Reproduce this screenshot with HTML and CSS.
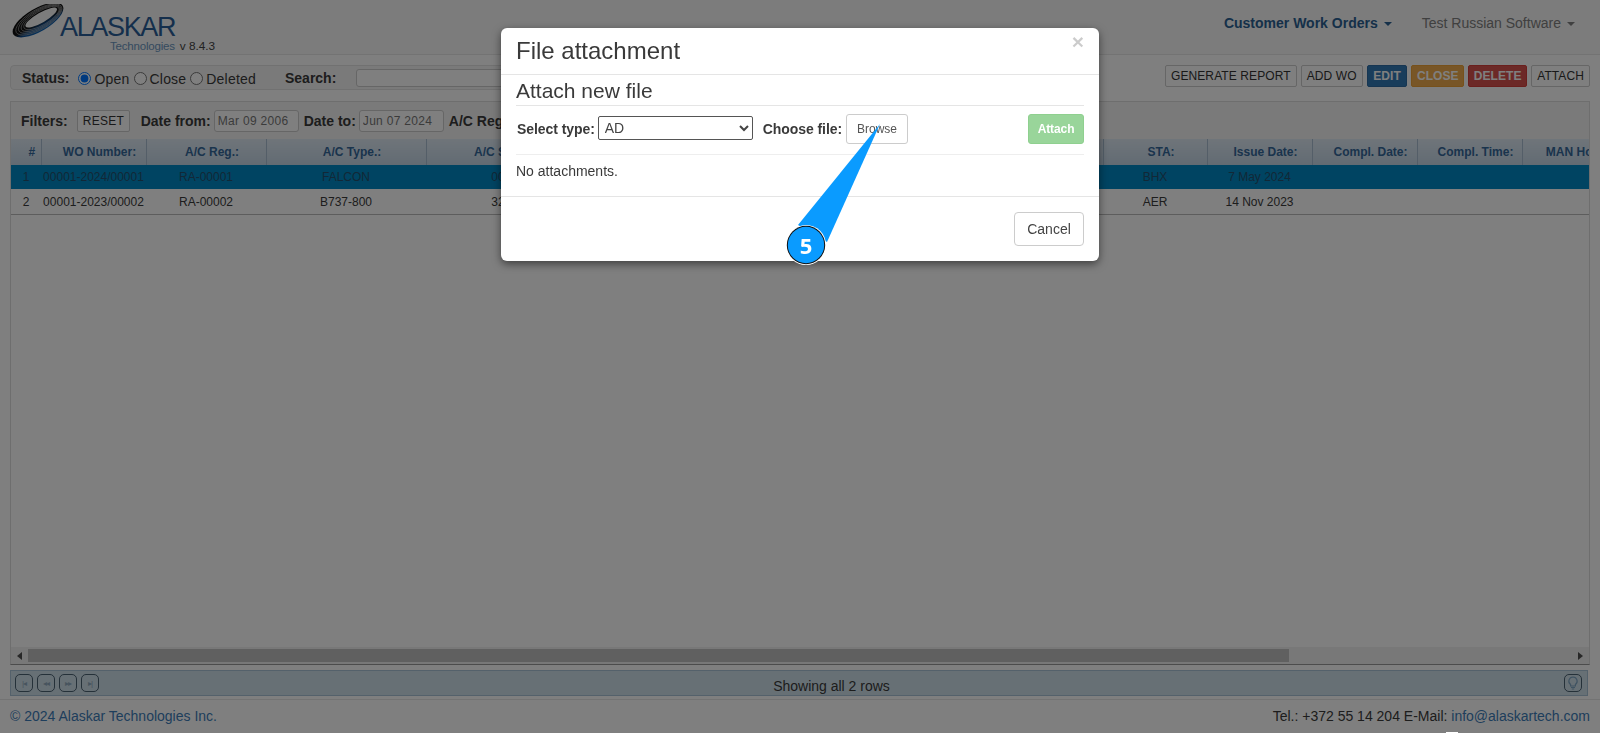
FILE: index.html
```html
<!DOCTYPE html>
<html>
<head>
  <meta charset="utf-8">
  <title>Customer Work Orders</title>
  <link rel="stylesheet" href="styles.css">
</head>
<body>
  <div class="page">
    <header class="navbar">
      <div class="brand">
        <svg class="brand-mark" width="58" height="34" viewBox="0 0 58 34">
          <defs>
            <linearGradient id="ring" x1="0" y1="0" x2="0" y2="1">
              <stop offset="0" stop-color="#080808"/>
              <stop offset="0.6" stop-color="#161616"/>
              <stop offset="0.8" stop-color="#0d4f96"/>
              <stop offset="1" stop-color="#0f66b8"/>
            </linearGradient>
          </defs>
          <g transform="rotate(-30 28 16)">
            <ellipse cx="28" cy="16" rx="28.5" ry="11.5" fill="url(#ring)"/>
            <g fill="none" stroke="#a8a8a8" stroke-width="0.6">
              <ellipse cx="29" cy="16" rx="26" ry="10"/>
              <ellipse cx="30" cy="16" rx="24" ry="9"/>
              <ellipse cx="31" cy="16" rx="22" ry="8"/>
              <ellipse cx="32" cy="16" rx="20" ry="7"/>
            </g>
            <ellipse cx="32" cy="15.5" rx="18" ry="5" fill="#f8f8f8"/>
          </g>
        </svg>
        <div class="brand-text">
          <div class="brand-name">ALASKAR</div>
          <div class="brand-sub"><span class="brand-tech">Technologies</span><span class="brand-ver">v 8.4.3</span></div>
        </div>
      </div>
      <nav class="nav-links">
        <a class="nav-link nav-active">Customer Work Orders<span class="caret"></span></a>
        <a class="nav-link">Test Russian Software<span class="caret"></span></a>
      </nav>
    </header>

    <div class="toolbar">
      <div class="status-well">
        <b class="status-label">Status:</b>
        <label class="radio"><input type="radio" name="st" checked>Open</label>
        <label class="radio"><input type="radio" name="st">Close</label>
        <label class="radio"><input type="radio" name="st">Deleted</label>
        <b class="search-label">Search:</b>
        <input class="search-input" type="text">
      </div>
      <div class="actions">
        <button class="btn">GENERATE REPORT</button>
        <button class="btn">ADD WO</button>
        <button class="btn btn-blue">EDIT</button>
        <button class="btn btn-orange">CLOSE</button>
        <button class="btn btn-red">DELETE</button>
        <button class="btn">ATTACH</button>
      </div>
    </div>

    <section class="grid-panel">
      <div class="filters">
        <b class="filters-label">Filters:</b>
        <button class="btn btn-reset">RESET</button>
        <b class="date-label">Date from:</b>
        <input class="date-input" type="text" value="Mar 09 2006">
        <b class="date-label">Date to:</b>
        <input class="date-input" type="text" value="Jun 07 2024">
        <b class="date-label">A/C Reg.:</b>
      </div>
      <div class="grid-scroll">
        <table class="grid">
          <colgroup>
            <col class="c-num"><col class="c-wo"><col class="c-reg"><col class="c-type"><col class="c-sn"><col class="c-hidden">
            <col class="c-sta"><col class="c-date"><col class="c-date"><col class="c-date"><col class="c-date">
          </colgroup>
          <thead>
            <tr>
              <th>#</th><th>WO Number:</th><th>A/C Reg.:</th><th>A/C Type.:</th><th>A/C Serial No:</th><th></th>
              <th>STA:</th><th>Issue Date:</th><th>Compl. Date:</th><th>Compl. Time:</th><th>MAN Hours:</th>
            </tr>
          </thead>
          <tbody>
            <tr class="selected">
              <td>1</td><td>00001-2024/00001</td><td>RA-00001</td><td>FALCON</td><td>00001</td><td></td>
              <td>BHX</td><td>7 May 2024</td><td></td><td></td><td></td>
            </tr>
            <tr>
              <td>2</td><td>00001-2023/00002</td><td>RA-00002</td><td>B737-800</td><td>32001</td><td></td>
              <td>AER</td><td>14 Nov 2023</td><td></td><td></td><td></td>
            </tr>
          </tbody>
        </table>
      </div>
      <div class="hscroll">
        <span class="arrow arrow-left"></span>
        <div class="hscroll-track"><div class="hscroll-thumb"></div></div>
        <span class="arrow arrow-right"></span>
      </div>
    </section>

    <div class="pager">
      <div class="pager-btns">
        <span class="pager-btn">|◂</span><span class="pager-btn">◂◂</span><span class="pager-btn">▸▸</span><span class="pager-btn">▸|</span>
      </div>
      <div class="pager-info">Showing all 2 rows</div>
      <span class="pager-btn pager-bulb">
        <svg width="12" height="14" viewBox="0 0 12 14">
          <path d="M6 1a4.2 4.2 0 0 0-2.4 7.6V10h4.8V8.6A4.2 4.2 0 0 0 6 1z" fill="none" stroke="#7fa6c4" stroke-width="1.2"/>
          <path d="M4 11.5h4M4.8 13h2.4" stroke="#7fa6c4" stroke-width="1.1"/>
        </svg>
      </span>
    </div>

    <footer class="footer">
      <a class="link">© 2024 Alaskar Technologies Inc.</a>
      <span>Tel.: +372 55 14 204 E-Mail: <a class="link">info@alaskartech.com</a></span>
    </footer>
  </div>

  <div class="backdrop"></div>

  <div class="modal">
    <div class="modal-head">
      <h4 class="modal-title">File attachment</h4>
      <span class="modal-close">×</span>
    </div>
    <div class="modal-body">
      <h5 class="attach-title">Attach new file</h5>
      <div class="attach-row">
        <b class="attach-label">Select type:</b>
        <select class="attach-select"><option>AD</option></select>
        <b class="attach-label attach-choose">Choose file:</b>
        <button class="btn-browse">Browse</button>
        <button class="btn-attach">Attach</button>
      </div>
      <div class="attach-empty">No attachments.</div>
    </div>
    <div class="modal-foot">
      <button class="btn-cancel">Cancel</button>
    </div>
  </div>

  <svg class="callout" width="100" height="150" viewBox="780 120 100 150">
    <polygon points="880,124 798,225 827,242" fill="#0a9bff"/>
    <circle cx="806" cy="245" r="20" fill="#fff"/>
    <circle cx="806" cy="245" r="19.2" fill="#111"/>
    <circle cx="806" cy="245" r="18.2" fill="#0a9bff"/>
    <text class="callout-num" x="806" y="254" text-anchor="middle">5</text>
  </svg>
  <div class="callout-edge"></div>
</body>
</html>
```

FILE: styles.css
```css
html, body {
  margin: 0;
  height: 733px;
  overflow: hidden;
  background: #fff;
}
body {
  font: 14px "Liberation Sans", Arial, sans-serif;
  color: #3a3a3a;
}
.page {
  height: 733px;
  display: flex;
  flex-direction: column;
}

/* top bar */
.navbar {
  flex: none;
  height: 54px;
  display: flex;
  justify-content: space-between;
  background: #f8f8f8;
  border-bottom: 1px solid #e7e7e7;
}
.brand {
  display: flex;
  padding: 4px 0 0 10px;
}
.brand-text {
  margin-left: -8px;
  padding-top: 11px;
}
.brand-name {
  font-size: 27px;
  line-height: 24px;
  letter-spacing: -1.35px;
  color: #2a5f98;
}
.brand-sub {
  display: flex;
  align-items: baseline;
  margin: 0 0 0 50px;
  white-space: nowrap;
}
.brand-tech {
  font-size: 11.5px;
  letter-spacing: -0.2px;
  color: #6b96bf;
}
.brand-ver {
  margin-left: 5px;
  font-size: 11.8px;
  color: #444;
}
.nav-links {
  display: flex;
  gap: 30px;
  padding: 15px 25px 0 0;
}
.nav-link {
  color: #808080;
  line-height: 17px;
}
.nav-active {
  color: #2b6193;
  font-weight: bold;
}
.caret {
  display: inline-block;
  margin-left: 6px;
  vertical-align: middle;
  border-top: 4px solid;
  border-left: 4px solid transparent;
  border-right: 4px solid transparent;
}

/* status row */
.toolbar {
  flex: none;
  display: flex;
  justify-content: space-between;
  margin-top: 10px;
  padding: 0 10px;
}
.status-well {
  width: 1060px;
  height: 25px;
  box-sizing: border-box;
  display: flex;
  align-items: center;
  padding: 1px 0 0 11px;
  background: #f5f5f5;
  border: 1px solid #e3e3e3;
  border-radius: 4px;
}
.status-label {
  margin-right: 5px;
}
.radio {
  display: flex;
  align-items: center;
  margin-top: 2px;
  letter-spacing: 0.2px;
}
.radio input {
  margin: 0 3px 2px 4px;
  width: 13px;
  height: 13px;
}
.search-label {
  margin-left: 29px;
}
.search-input {
  width: 400px;
  height: 18px;
  box-sizing: border-box;
  margin-left: 20px;
  border: 1px solid #ccc;
  border-radius: 3px;
  background: #fff;
}
.actions {
  display: flex;
  gap: 4px;
  align-items: flex-start;
}
.btn {
  height: 22px;
  padding: 0 5px;
  font: 12px "Liberation Sans", Arial, sans-serif;
  letter-spacing: 0.1px;
  color: #333;
  background: #fff;
  border: 1px solid #ccc;
  border-radius: 2px;
  white-space: nowrap;
}
.btn-blue { background: #337ab7; border-color: #2e6da4; color: #fff; font-weight: bold; padding: 0 5.5px; }
.btn-orange { background: #f0ad4e; border-color: #eea236; color: #fff; font-weight: bold; padding: 0 4.5px; }
.btn-red { background: #d9534f; border-color: #d43f3a; color: #fff; font-weight: bold; padding: 0 4.5px; }

/* grid */
.grid-panel {
  flex: 1;
  min-height: 0;
  margin: 11px 10px 0;
  display: flex;
  flex-direction: column;
  border: 1px solid #ddd;
  border-bottom-color: #999;
}
.filters {
  flex: none;
  height: 37px;
  display: flex;
  align-items: center;
  background: #f5f5f5;
  padding-left: 10px;
  white-space: nowrap;
}
.btn-reset {
  margin: 0 11px 0 9px;
  width: 53px;
  letter-spacing: 0.3px;
}
.date-input {
  width: 85px;
  height: 22px;
  box-sizing: border-box;
  margin: 0 5px 0 3px;
  padding: 0 3px;
  font: 12px "Liberation Sans", Arial, sans-serif;
  letter-spacing: 0.3px;
  color: #777;
  border: 1px solid #ccc;
  border-radius: 3px;
  background: #fff;
}
.grid-scroll {
  flex: 1;
  min-height: 0;
  overflow: hidden;
  background: #fff;
}
.grid {
  table-layout: fixed;
  width: 1616px;
  border-collapse: collapse;
  font-size: 12px;
}
.c-num { width: 30px; }
.c-wo { width: 105px; }
.c-reg { width: 120px; }
.c-type { width: 160px; }
.c-sn { width: 164px; }
.c-hidden { width: 513px; }
.c-sta { width: 104px; }
.c-date { width: 105px; }
.grid th {
  height: 26px;
  padding: 0 0 0 12px;
  box-sizing: border-box;
  text-align: center;
  white-space: nowrap;
  overflow: hidden;
  color: #35689a;
  background: linear-gradient(#dfeaf4, #c4d6e6);
  border-right: 1px solid #a9bdd0;
  border-bottom: 0;
}
.grid td {
  height: 24px;
  padding: 0;
  text-align: center;
  white-space: nowrap;
  overflow: hidden;
  border-bottom: 1px solid #bbb;
}
.grid tr.selected td {
  color: #24506e;
  background: #0088c4;
  border-bottom-color: #fff;
}
.hscroll {
  flex: none;
  height: 17px;
  display: flex;
  align-items: center;
  background: #f1f1f1;
}
.arrow {
  flex: none;
  width: 17px;
  display: flex;
  justify-content: center;
}
.arrow-left::before {
  content: "";
  border-right: 5px solid #505050;
  border-top: 4px solid transparent;
  border-bottom: 4px solid transparent;
}
.arrow-right::before {
  content: "";
  border-left: 5px solid #505050;
  border-top: 4px solid transparent;
  border-bottom: 4px solid transparent;
}
.hscroll-track {
  flex: 1;
  height: 13px;
}
.hscroll-thumb {
  width: 1261px;
  height: 100%;
  background: #c1c1c1;
}

/* pager */
.pager {
  flex: none;
  height: 26px;
  box-sizing: border-box;
  margin: 5px 12px 0 10px;
  padding: 0 4px;
  display: flex;
  align-items: center;
  justify-content: space-between;
  background: #cfe0ea;
  border: 1px solid #a9c2d6;
}
.pager-btns {
  display: flex;
  gap: 4px;
}
.pager-btn {
  width: 18px;
  height: 18px;
  box-sizing: border-box;
  display: flex;
  align-items: center;
  justify-content: center;
  font-size: 8px;
  letter-spacing: -1px;
  color: #8fa9bd;
  border: 1px solid #4a6273;
  border-radius: 5px;
}
.pager-info {
  flex: 1;
  text-align: center;
  padding-top: 5px;
}
.pager-bulb {
  margin-right: 1px;
}

/* footer */
.footer {
  flex: none;
  height: 34px;
  box-sizing: border-box;
  margin-top: 3px;
  padding: 8px 10px 0;
  display: flex;
  justify-content: space-between;
  border-top: 1px solid #e7e7e7;
}
.link {
  color: #3d7db8;
}

/* dialog */
.backdrop {
  position: fixed;
  inset: 0;
  background: rgba(0, 0, 0, 0.5);
}
.modal {
  position: absolute;
  left: 501px;
  top: 28px;
  width: 598px;
  height: 233px;
  box-sizing: border-box;
  display: flex;
  flex-direction: column;
  background: #fff;
  border-radius: 6px;
  box-shadow: 0 3px 9px rgba(0, 0, 0, 0.5);
}
.modal-head {
  position: relative;
  flex: none;
  height: 47px;
  box-sizing: border-box;
  padding: 9px 15px 0;
  border-bottom: 1px solid #e5e5e5;
}
.modal-title {
  margin: 0;
  font-size: 24px;
  font-weight: normal;
  line-height: 28px;
}
.modal-close {
  position: absolute;
  right: 15px;
  top: 2px;
  font-size: 21px;
  font-weight: bold;
  color: #000;
  opacity: 0.2;
}
.modal-body {
  flex: 1;
  padding: 0 15px;
}
.attach-title {
  margin: 0;
  height: 31px;
  box-sizing: border-box;
  padding-top: 4px;
  font-size: 21px;
  font-weight: normal;
  line-height: 23px;
  border-bottom: 1px solid #e5e5e5;
}
.attach-row {
  display: flex;
  align-items: center;
  height: 49px;
  box-sizing: border-box;
  padding: 0 0 2px 1px;
  border-bottom: 1px solid #eee;
}
.attach-label {
  margin-right: 3px;
  letter-spacing: -0.07px;
}
.attach-select {
  width: 155px;
  height: 24px;
  margin-bottom: 2px;
  padding-left: 2px;
  font: 14px "Liberation Sans", Arial, sans-serif;
  color: #444;
  background: #fff;
  border: 1px solid #555;
  border-radius: 2px;
}
.attach-choose {
  margin: 0 4px 0 10px;
}
.btn-browse {
  width: 62px;
  height: 30px;
  font: 12px "Liberation Sans", Arial, sans-serif;
  color: #555;
  background: #fff;
  border: 1px solid #ccc;
  border-radius: 3px;
}
.btn-attach {
  width: 56px;
  height: 30px;
  margin-left: auto;
  font: bold 12px "Liberation Sans", Arial, sans-serif;
  letter-spacing: -0.1px;
  color: #fff;
  background: #99d59a;
  border: 1px solid #8fd08f;
  border-radius: 3px;
}
.attach-empty {
  padding-top: 6px;
  line-height: 20px;
}
.modal-foot {
  flex: none;
  height: 65px;
  box-sizing: border-box;
  padding: 15px;
  display: flex;
  justify-content: flex-end;
  border-top: 1px solid #e5e5e5;
}
.btn-cancel {
  width: 70px;
  height: 34px;
  font: 14px "Liberation Sans", Arial, sans-serif;
  color: #444;
  background: #fff;
  border: 1px solid #ccc;
  border-radius: 4px;
}

/* numbered pointers laid over the dialog */
.callout {
  position: absolute;
  left: 780px;
  top: 120px;
}
.callout-num {
  font: bold 22px "Open Sans", sans-serif;
  fill: #fff;
}
.callout-edge {
  position: absolute;
  left: 1446px;
  top: 732px;
  width: 12px;
  height: 1px;
  background: #fff;
}
```
